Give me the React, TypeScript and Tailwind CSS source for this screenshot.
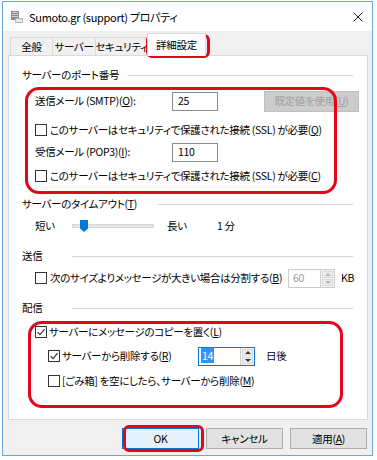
import type { ReactNode } from 'react';

function U({ children }: { children: ReactNode }) {
  return <span className="underline underline-offset-[1px]">{children}</span>;
}

function Check({ checked = false }: { checked?: boolean }) {
  return (
    <span className="flex h-[12px] w-[12px] shrink-0 items-center justify-center border border-[#333] bg-white">
      {checked && (
        <svg viewBox="0 0 10 10" className="h-[10px] w-[10px]">
          <path d="M1.6 5.2 L4 7.6 L8.6 2.2" stroke="#333" strokeWidth="1.2" fill="none" />
        </svg>
      )}
    </span>
  );
}

function Spin({ disabled = false }: { disabled?: boolean }) {
  const c = disabled ? '#b4b4b4' : '#333';
  return (
    <div className="flex h-full w-[14px] flex-col gap-px border-l border-[#d0d0d0] bg-[#f4f4f4] p-px">
      <div className="flex flex-1 items-center justify-center border border-[#d9d9d9] bg-[#ececec]">
        <svg viewBox="0 0 6 3" className="h-[3px] w-[6px]"><path d="M0 3 L3 0 L6 3Z" fill={c} /></svg>
      </div>
      <div className="flex flex-1 items-center justify-center border border-[#d9d9d9] bg-[#ececec]">
        <svg viewBox="0 0 6 3" className="h-[3px] w-[6px]"><path d="M0 0 L3 3 L6 0Z" fill={c} /></svg>
      </div>
    </div>
  );
}

function Header({ label, w, mt }: { label: ReactNode; w: string; mt: string }) {
  return (
    <div className={`flex h-[20px] items-center pl-[13px] pr-[14px] ${mt}`}>
      <div className={`shrink-0 ${w}`}>{label}</div>
      <div className="h-px flex-1 bg-[#d5d5d5]" />
    </div>
  );
}

function Tab({ label, selected = false, w }: { label: string; selected?: boolean; w: string }) {
  return (
    <div
      className={[
        'flex shrink-0 items-center justify-center border border-b-0 border-[#d9d9d9] -mr-px',
        w,
        selected ? 'relative z-10 -mb-px h-[23px] bg-white' : 'h-[18px] bg-[#f0f0f0]',
      ].join(' ')}
    >
      {label}
    </div>
  );
}

function Btn({ children, primary = false }: { children: ReactNode; primary?: boolean }) {
  return (
    <div
      className={[
        'flex h-[21px] w-[77px] items-center justify-center border',
        primary ? 'border-[#0078d7] bg-[#e5f1fb]' : 'border-[#adadad] bg-[#e1e1e1]',
      ].join(' ')}
    >
      {children}
    </div>
  );
}

export default function App() {
  return (
    <div className="relative h-[460px] w-[377px] overflow-hidden whitespace-nowrap bg-white text-[10.5px] font-normal leading-[14px] tracking-[-0.3px] text-black [font-family:'Noto_Sans_CJK_JP',sans-serif] [font-feature-settings:'palt']">
      {/* Window */}
      <div className="ml-[2px] mt-[1px] flex h-[455px] w-[371px] flex-col border border-[#6aa7db] bg-[#f0f0f0]">
        {/* Title bar */}
        <div className="flex h-[29px] shrink-0 items-center bg-white pl-[7px] pr-[9px]">
          <svg viewBox="0 0 14 14" className="h-[14px] w-[14px]">
            <rect x="1" y="1" width="8" height="9" fill="#8a8a8a" />
            <rect x="2" y="2" width="6" height="1" fill="#d0d0d0" />
            <rect x="2" y="4" width="6" height="1" fill="#d0d0d0" />
            <rect x="2" y="6" width="6" height="1" fill="#d0d0d0" />
            <rect x="5" y="8" width="8" height="5" fill="#b5b5b5" />
            <rect x="6" y="9" width="6" height="3" fill="#e8e8e8" />
          </svg>
          <span className="ml-[5px] text-[11px]">Sumoto.gr (support) プロパティ</span>
          <span className="flex-1" />
          <svg viewBox="0 0 10 10" className="h-[10px] w-[10px]">
            <path d="M0.5 0.5 L9.5 9.5 M9.5 0.5 L0.5 9.5" stroke="#222" strokeWidth="1" />
          </svg>
        </div>

        <div className="flex flex-1 flex-col pl-[5px] pr-[4px]">
          {/* Tabs */}
          <div className="flex h-[24px] items-end pl-[2px]">
            <Tab label="全般" w="w-[43px]" />
            <Tab label="サーバー" w="w-[44px]" />
            <Tab label="セキュリティ" w="w-[53px]" />
            <Tab label="詳細設定" w="w-[59px]" selected />
          </div>

          {/* Panel */}
          <div className="flex h-[365px] w-[360px] flex-col border border-[#d9d9d9] bg-white pt-[9px]">
            <Header label="サーバーのポート番号" w="w-[106px]" mt="mt-0" />

            <div className="mt-[6px] flex h-[20px] items-center pl-[26px]">
              <span className="w-[137px]">送信メール (SMTP)(<U>O</U>):</span>
              <div className="flex h-[19px] w-[46px] items-center border border-[#8c8c8c] pl-[5px]">25</div>
              <div className="ml-[46px] flex h-[21px] w-[95px] items-center justify-center border border-[#bfbfbf] bg-[#cccccc] text-[#a0a0a0]">
                既定値を使用(<U>U</U>)
              </div>
            </div>

            <div className="mt-[9px] flex h-[20px] items-center gap-[3px] pl-[26px]">
              <Check />
              <span>このサーバーはセキュリティで保護された接続 (SSL) が必要(<U>Q</U>)</span>
            </div>

            <div className="mt-[2px] flex h-[20px] items-center pl-[26px]">
              <span className="w-[137px]">受信メール (POP3)(<U>I</U>):</span>
              <div className="flex h-[19px] w-[46px] items-center border border-[#8c8c8c] pl-[5px]">110</div>
            </div>

            <div className="mt-[4px] flex h-[20px] items-center gap-[3px] pl-[26px]">
              <Check />
              <span>このサーバーはセキュリティで保護された接続 (SSL) が必要(<U>C</U>)</span>
            </div>

            <Header label={<>サーバーのタイムアウト(<U>T</U>)</>} w="w-[136px]" mt="mt-[8px]" />

            <div className="mt-[2px] flex h-[20px] items-center pl-[26px]">
              <span className="w-[37px]">短い</span>
              <div className="relative flex h-[14px] w-[82px] items-center">
                <div className="h-[4px] w-full border border-[#d6d6d6] bg-[#e7e7e7]" />
                <svg viewBox="0 0 8 12" className="absolute left-[8px] top-[1px] h-[12px] w-[8px]">
                  <path d="M0 0 H8 V8.5 L4 12 L0 8.5Z" fill="#0078d7" />
                </svg>
              </div>
              <span className="ml-[13px] w-[50px]">長い</span>
              <span>1 分</span>
            </div>

            <Header label="送信" w="w-[50px]" mt="mt-[10px]" />

            <div className="mt-[2px] flex h-[20px] items-center pl-[26px]">
              <Check />
              <span className="ml-[3px] w-[238px]">次のサイズよりメッセージが大きい場合は分割する(<U>B</U>)</span>
              <div className="flex h-[19px] w-[47px] items-center border border-[#cccccc] bg-white">
                <span className="flex-1 pl-[4px] text-[#9a9a9a]">60</span>
                <Spin disabled />
              </div>
              <span className="ml-[6px]">KB</span>
            </div>

            <Header label="配信" w="w-[50px]" mt="mt-[10px]" />

            <div className="mt-[4px] flex h-[20px] items-center gap-[2px] pl-[26px]">
              <Check checked />
              <span>サーバーにメッセージのコピーを置く(<U>L</U>)</span>
            </div>

            <div className="mt-[4px] flex h-[20px] items-center pl-[39px]">
              <Check checked />
              <span className="ml-[2px] w-[136px]">サーバーから削除する(<U>R</U>)</span>
              <div className="flex h-[19px] w-[57px] items-center border border-[#0078d7] bg-white">
                <span className="flex-1 pl-[2px]">
                  <span className="bg-[#3390ff] px-px text-white">14</span>
                </span>
                <Spin />
              </div>
              <span className="ml-[11px]">日後</span>
            </div>

            <div className="mt-[5px] flex h-[20px] items-center gap-[2px] pl-[39px]">
              <Check />
              <span>[ごみ箱] を空にしたら、サーバーから削除(<U>M</U>)</span>
            </div>
          </div>

          {/* Buttons */}
          <div className="mt-[8px] flex justify-end gap-[7px] pr-px">
            <Btn primary>OK</Btn>
            <Btn>キャンセル</Btn>
            <Btn>適用(<U>A</U>)</Btn>
          </div>
        </div>
      </div>

      {/* Red highlight overlays */}
      <div className="pointer-events-none absolute left-[146px] top-[34px] h-[24px] w-[64px] rounded-[6px] border-[3px] border-[#e3061b]" />
      <div className="pointer-events-none absolute left-[25px] top-[87px] h-[107px] w-[312px] rounded-[14px] border-[3px] border-[#e3061b]" />
      <div className="pointer-events-none absolute left-[28px] top-[321px] h-[87px] w-[315px] rounded-[14px] border-[3px] border-[#e3061b]" />
      <div className="pointer-events-none absolute left-[123px] top-[425px] h-[27px] w-[81px] rounded-[6px] border-[3px] border-[#e3061b]" />
    </div>
  );
}
